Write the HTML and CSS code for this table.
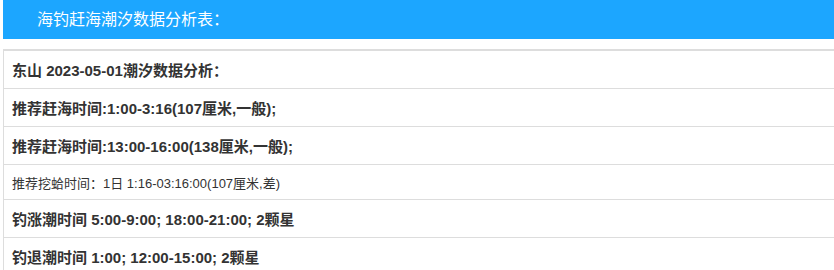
FILE: index.html
```html
<!DOCTYPE html>
<html lang="zh-CN">
<head>
<meta charset="utf-8">
<title>海钓赶海潮汐数据分析表</title>
<link rel="stylesheet" href="styles.css">
</head>
<body>
<div class="wrap">
  <div class="header">海钓赶海潮汐数据分析表：</div>
  <div class="table">
    <div class="row">东山 2023-05-01潮汐数据分析：</div>
    <div class="row">推荐赶海时间:1:00-3:16(107厘米,一般);</div>
    <div class="row">推荐赶海时间:13:00-16:00(138厘米,一般);</div>
    <div class="row small">推荐挖蛤时间：1日 1:16-03:16:00(107厘米,差)</div>
    <div class="row">钓涨潮时间 5:00-9:00; 18:00-21:00; 2颗星</div>
    <div class="row">钓退潮时间 1:00; 12:00-15:00; 2颗星</div>
  </div>
</div>
</body>
</html>
```

FILE: styles.css
```css
html, body {
  margin: 0;
  padding: 0;
  background: #fff;
}
body {
  font-family: "Liberation Sans", Arial, "Noto Sans CJK SC", sans-serif;
  color: #333;
}
.wrap {
  margin-left: 3px;
}
.header {
  height: 39px;
  line-height: 39px;
  background: #1ca6ff;
  color: #fff;
  font-size: 16px;
  padding-left: 34px;
}
.table {
  margin-top: 10px;
  border-top: 2px solid #ddd;
  border-left: 1px solid #ddd;
}
.row {
  height: 37px;
  border-bottom: 1px solid #ddd;
  display: flex;
  align-items: center;
  padding-left: 8px;
  font-size: 15px;
  font-weight: bold;
  white-space: nowrap;
}
.row.small {
  height: 34px;
  font-size: 13px;
  font-weight: normal;
}
```
